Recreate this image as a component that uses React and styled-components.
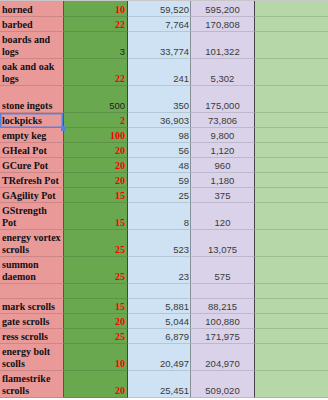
import styled, { createGlobalStyle } from "styled-components";

const GlobalStyle = createGlobalStyle`
  body {
    margin: 0;
    background: #ffffff;
  }
`;

const rows = [
  { name: ["horned"], qty: "10", red: true, price: "59,520", total: "595,200", h: 16 },
  { name: ["barbed"], qty: "22", red: true, price: "7,764", total: "170,808" },
  { name: ["boards and", "logs"], qty: "3", red: false, price: "33,774", total: "101,322", tall: true },
  { name: ["oak and oak", "logs"], qty: "22", red: true, price: "241", total: "5,302", tall: true },
  { name: ["stone ingots"], qty: "500", red: false, price: "350", total: "175,000", tall: true },
  { name: ["lockpicks"], qty: "2", red: true, price: "36,903", total: "73,806", selected: true },
  { name: ["empty keg"], qty: "100", red: true, price: "98", total: "9,800" },
  { name: ["GHeal Pot"], qty: "20", red: true, price: "56", total: "1,120" },
  { name: ["GCure Pot"], qty: "20", red: true, price: "48", total: "960" },
  { name: ["TRefresh Pot"], qty: "20", red: true, price: "59", total: "1,180" },
  { name: ["GAgility Pot"], qty: "15", red: true, price: "25", total: "375" },
  { name: ["GStrength", "Pot"], qty: "15", red: true, price: "8", total: "120", tall: true },
  { name: ["energy vortex", "scrolls"], qty: "25", red: true, price: "523", total: "13,075", tall: true },
  { name: ["summon", "daemon"], qty: "25", red: true, price: "23", total: "575", tall: true },
  { name: [], qty: "", red: false, price: "", total: "" },
  { name: ["mark scrolls"], qty: "15", red: true, price: "5,881", total: "88,215" },
  { name: ["gate scrolls"], qty: "20", red: true, price: "5,044", total: "100,880" },
  { name: ["ress scrolls"], qty: "25", red: true, price: "6,879", total: "171,975" },
  { name: ["energy bolt", "scolls"], qty: "10", red: true, price: "20,497", total: "204,970", tall: true },
  { name: ["flamestrike", "scrolls"], qty: "20", red: true, price: "25,451", total: "509,020", tall: true },
];

export default function App() {
  return (
    <>
      <GlobalStyle />
      <Sheet>
        {rows.map((row, i) => (
          <Row key={i} $h={row.h || (row.tall ? 27 : 15)}>
            <NameCell $selected={row.selected}>
              {row.name.map((line) => (
                <span key={line}>{line}</span>
              ))}
              {row.selected && (
                <Selection>
                  <Handle />
                </Selection>
              )}
            </NameCell>
            <QtyCell $red={row.red}>{row.qty}</QtyCell>
            <PriceCell>{row.price}</PriceCell>
            <TotalCell>{row.total}</TotalCell>
            <SpareCell />
          </Row>
        ))}
      </Sheet>
    </>
  );
}

const Sheet = styled.div`
  width: 328px;
  border-top: 1px solid #c8c8c8;
`;

const Row = styled.div`
  display: grid;
  grid-template-columns: 64px 64px 63px 64px 1fr;
  height: ${(p) => p.$h}px;
`;

const Cell = styled.div`
  box-sizing: border-box;
  display: flex;
  flex-direction: column;
  justify-content: flex-end;
  line-height: 12px;
  white-space: nowrap;
  border-bottom: 1px solid rgba(0, 0, 0, 0.12);
`;

const NameCell = styled(Cell)`
  position: ${(p) => (p.$selected ? "relative" : "static")};
  background: #ea9999;
  border-right: 1px solid #555555;
  padding: 0 0 0 2px;
  font-family: "Liberation Serif", "Times New Roman", serif;
  font-weight: 700;
  font-size: 10px;
  color: #111111;
`;

const QtyCell = styled(Cell)`
  background: #6aa84f;
  border-right: 1px solid #444444;
  align-items: flex-end;
  padding-right: 2px;
  font-family: ${(p) =>
    p.$red ? `"Liberation Serif", serif` : `"Liberation Sans", Arial, sans-serif`};
  font-weight: ${(p) => (p.$red ? 700 : 400)};
  font-size: ${(p) => (p.$red ? "10px" : "9.5px")};
  color: ${(p) => (p.$red ? "#ff0000" : "#222222")};
`;

const PriceCell = styled(Cell)`
  background: #cfe2f3;
  border-right: 1px solid #8a8f96;
  align-items: flex-end;
  padding-right: 1px;
  font-family: "Liberation Sans", Arial, sans-serif;
  font-size: 9.5px;
  color: #3a3a3a;
`;

const TotalCell = styled(Cell)`
  background: #d9d2e9;
  border-right: 1px solid #444444;
  align-items: center;
  font-family: "Liberation Sans", Arial, sans-serif;
  font-size: 9.5px;
  color: #3a3a3a;
`;

const SpareCell = styled(Cell)`
  background: #b6d7a8;
`;

const Selection = styled.div`
  position: absolute;
  top: 0;
  left: 0;
  right: 0;
  bottom: -1px;
  border: 1px solid #4a86e8;
  box-shadow: inset 0 0 0 1px rgba(74, 134, 232, 0.45);
`;

const Handle = styled.div`
  position: absolute;
  right: -4px;
  bottom: -4px;
  width: 5px;
  height: 5px;
  background: #4a86e8;
`;
